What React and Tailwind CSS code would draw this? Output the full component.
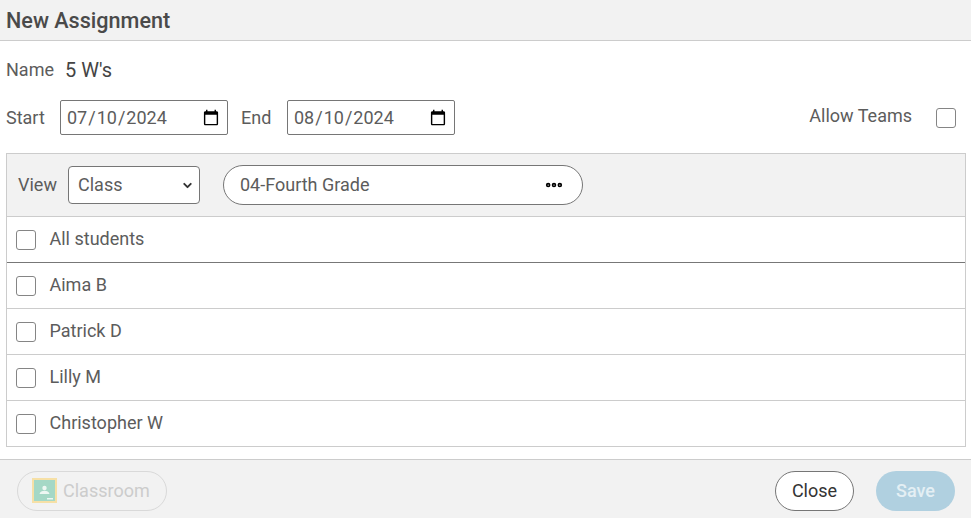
import { ChevronDown, Ellipsis } from "lucide-react";

const students = ["Aima B", "Patrick D", "Lilly M", "Christopher W"];

function Check() {
  return (
    <input
      type="checkbox"
      className="appearance-none w-[20px] h-[20px] bg-white border border-[#858585] rounded-[3px] shrink-0"
    />
  );
}

function DateBox({ value }) {
  return (
    <input
      type="date"
      defaultValue={value}
      className="w-[168px] h-[35px] pl-[5px] pr-[5px] bg-white border border-[#767676] rounded-[2px] text-[18px] text-[#5c5c5c]"
    />
  );
}

function StudentRow({ name, last, head }) {
  return (
    <div
      className={`flex items-center pl-[9px] gap-[13.500px] ${
        last ? "h-[45px]" : head ? "h-[46px] border-b border-[#777]" : "h-[46px] border-b border-[#ccc]"
      }`}
    >
      <Check />
      <span className="text-[18px] text-[#5c5c5c] pb-[2px]">{name}</span>
    </div>
  );
}

export default function App() {
  return (
    <div className="w-[971px] h-[518px] flex flex-col bg-white overflow-hidden font-['Roboto',sans-serif] text-[#5c5c5c]">
      {/* Title */}
      <div className="h-[41px] shrink-0 flex items-center px-[6px] pt-[3px] bg-[#f2f2f2] border-b border-[#ccc]">
        <h1 className="text-[21.6px] font-medium text-[#4a4a4a]">New Assignment</h1>
      </div>

      {/* Name */}
      <div className="h-[59px] shrink-0 flex items-center px-[6px] gap-[11px] text-[18px]">
        <span className="pb-[2px]">Name</span>
        <span className="text-[#444] text-[20px] pb-[1px]">5 W's</span>
      </div>

      {/* Dates */}
      <div className="h-[35px] shrink-0 flex items-center pl-[6px] pr-[15px] text-[18px]">
        <span className="w-[54px]">Start</span>
        <DateBox value="2024-07-10" />
        <span className="ml-[13px] w-[46px]">End</span>
        <DateBox value="2024-08-10" />
        <span className="ml-auto mr-[24px] pb-[5px]">Allow Teams</span>
        <Check />
      </div>

      {/* Student table */}
      <div className="mt-[18px] mx-[6px] w-[960px] shrink-0 border border-[#ccc]">
        <div className="h-[63px] flex items-center pl-[11px] bg-[#f2f2f2] border-b border-[#ccc]">
          <span className="text-[18px] w-[50px] pb-[2px]">View</span>
          <div className="relative">
            <select
              defaultValue="Class"
              className="appearance-none block w-[132px] h-[38px] pl-[9px] pb-[2px] bg-white border border-[#767676] rounded-[4px] text-[18px] text-[#5c5c5c]"
            >
              <option>Class</option>
            </select>
            <ChevronDown
              size={13}
              strokeWidth={3.5}
              className="absolute right-[6px] top-[13px] text-[#333] pointer-events-none"
            />
          </div>
          <div className="ml-[23px] w-[360px] h-[40px] flex items-center justify-between pl-[16px] pr-[18px] bg-white border border-[#767676] rounded-full">
            <span className="text-[18px] pb-[2px]">04-Fourth Grade</span>
            <Ellipsis size={20} strokeWidth={3.5} className="text-black" />
          </div>
        </div>
        <StudentRow name="All students" head />
        {students.map((s, i) => (
          <StudentRow key={s} name={s} last={i === students.length - 1} />
        ))}
      </div>

      {/* Footer */}
      <div className="mt-[12px] flex-1 flex items-center justify-between pl-[17px] pr-[16px] pt-[3px] bg-[#f2f2f2] border-t border-[#ccc]">
        <button className="w-[150px] h-[40px] flex items-center gap-[6px] pl-[14px] border border-[#d9d9d9] rounded-full text-[18px] text-[#ccc]">
          <svg width="25" height="25" viewBox="0 0 25 25">
            <rect width="25" height="25" fill="#f6e0a6" />
            <rect x="2" y="2" width="21" height="21" fill="#a5d8c6" />
            <circle cx="12.5" cy="10" r="2.2" fill="#eef7f3" />
            <path d="M7.5 16c.5-2.400 2.600-3.200 5-3.200s4.500.8 5 3.200z" fill="#eef7f3" />
            <rect x="15" y="20" width="6" height="1.500" fill="#eef7f3" />
          </svg>
          Classroom
        </button>
        <div className="flex items-center gap-[22px]">
          <button className="w-[79px] h-[40px] bg-white border border-[#767676] rounded-full text-[18px] text-[#333]">
            Close
          </button>
          <button className="w-[79px] h-[40px] bg-[#b0d0e0] rounded-full text-[18px] font-medium text-[#e4eff4]">
            Save
          </button>
        </div>
      </div>
    </div>
  );
}
